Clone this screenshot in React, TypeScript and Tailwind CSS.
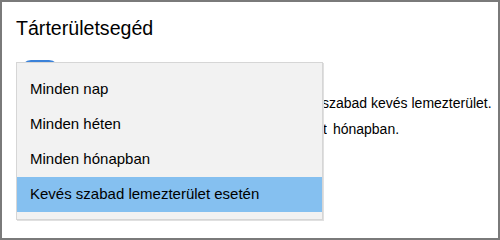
import React from "react";

const options = [
  "Minden nap",
  "Minden héten",
  "Minden hónapban",
  "Kevés szabad lemezterület esetén",
];

export default function App() {
  const selected = 3;

  return (
    <div
      className="relative h-[240px] w-[500px] overflow-hidden border-2 border-[#7a7a7a] bg-white text-black"
      style={{ fontFamily: '"Liberation Sans", Arial, sans-serif' }}
    >
      <div className="flex flex-col px-[14px] pt-[14px]">
        <h1 className="text-[19.6px] leading-[24px] font-normal">Tárterületsegéd</h1>

        {/* the on/off switch sits mostly under the open menu */}
        <div className="mt-[20px] ml-[5px] h-[20px] w-[38px] rounded-full bg-[#3b82d9]" />

        <div className="mt-[10px] flex flex-col text-[14px] leading-[26px] whitespace-nowrap">
          <p className="flex">
            <span className="flex w-[306px] shrink-0 justify-end overflow-hidden">
              A tárterületsegéd akkor fut, ha
            </span>
            <span>szabad kevés lemezterület.</span>
          </p>
          <p className="flex">
            <span className="flex w-[311px] shrink-0 justify-end overflow-hidden">
              Lemezterület az elmúlt
            </span>
            <span className="ml-[2px]">&nbsp;hónapban.</span>
          </p>
        </div>
      </div>

      {/* open dropdown menu */}
      <ul className="absolute top-[60px] left-[14px] w-[307px] border border-[#d6d6d6] bg-[#f2f2f2] pt-[9px] pb-[7px] shadow-[1px_1px_0_#e0e0e0]">
        {options.map((label, i) => (
          <li
            key={label}
            className={`flex h-[35px] items-center pl-[13px] text-[15px] ${
              i === selected ? "bg-[#85c0f0]" : ""
            }`}
          >
            {label}
          </li>
        ))}
      </ul>
    </div>
  );
}
